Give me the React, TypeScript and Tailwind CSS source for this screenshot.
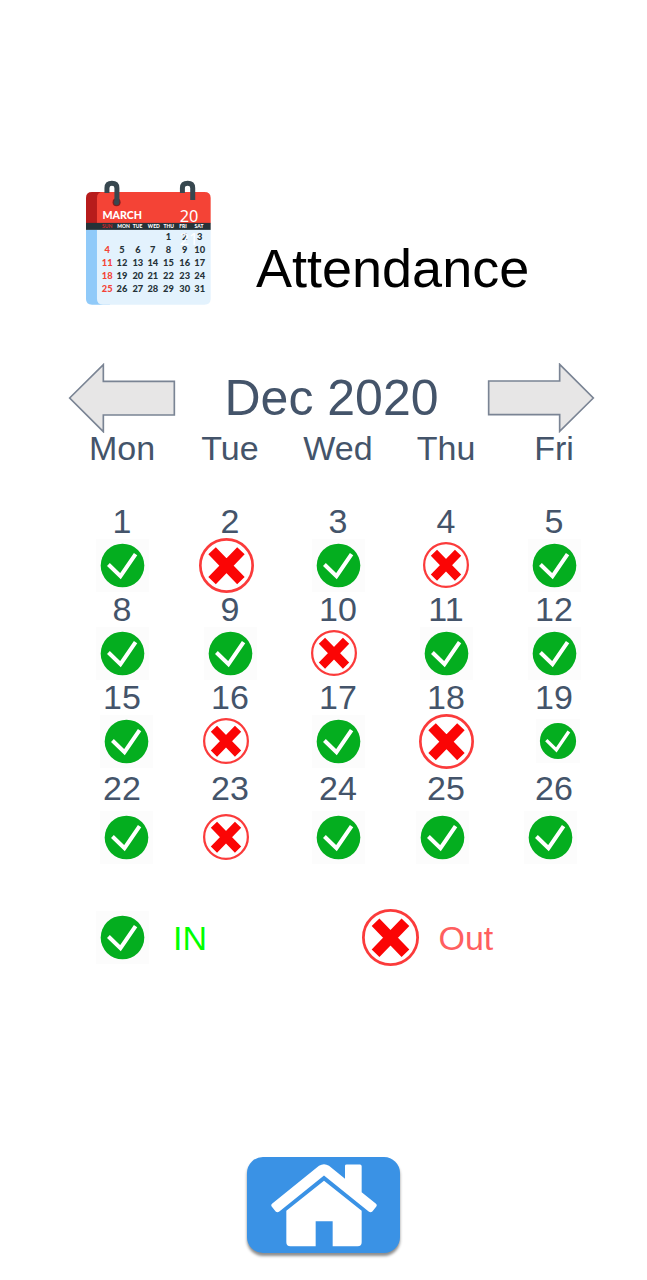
import React from "react";

type Status = "in" | "out";
type Size = "sm" | "md" | "lg" | "xl";
type Shift = "left" | "right";

interface Day {
  date: number;
  status: Status;
  size?: Size;
  shift?: Shift;
}

const weekdays = ["Mon", "Tue", "Wed", "Thu", "Fri"];

const weeks: Day[][] = [
  [
    { date: 1, status: "in" },
    { date: 2, status: "out", size: "lg", shift: "left" },
    { date: 3, status: "in" },
    { date: 4, status: "out" },
    { date: 5, status: "in" },
  ],
  [
    { date: 8, status: "in" },
    { date: 9, status: "in" },
    { date: 10, status: "out", shift: "left" },
    { date: 11, status: "in" },
    { date: 12, status: "in" },
  ],
  [
    { date: 15, status: "in", shift: "right" },
    { date: 16, status: "out", shift: "left" },
    { date: 17, status: "in" },
    { date: 18, status: "out", size: "lg" },
    { date: 19, status: "in", size: "sm", shift: "right" },
  ],
  [
    { date: 22, status: "in", shift: "right" },
    { date: 23, status: "out", shift: "left" },
    { date: 24, status: "in" },
    { date: 25, status: "in", shift: "left" },
    { date: 26, status: "in", shift: "left" },
  ],
];

const inSizes: Record<Size, string> = {
  sm: "size-11",
  md: "size-[53px]",
  lg: "size-[53px]",
  xl: "size-[53px]",
};

const outSizes: Record<Size, string> = {
  sm: "size-[46px]",
  md: "size-[46px]",
  lg: "size-[55px]",
  xl: "size-[57px]",
};

const shifts: Record<Shift, string> = { left: "pr-2", right: "pl-2" };

function StatusIcon({ status, size = "md" }: { status: Status; size?: Size }) {
  if (status === "in") {
    return (
      <svg viewBox="0 0 158 158" role="img" aria-label="In" className={`shrink-0 ${inSizes[size]}`}>
        <rect width="158" height="158" fill="#fcfcfc" />
        <circle cx="79" cy="79" r="65" fill="#04ae1f" />
        <path d="M37 76 L73 111 L118 45" fill="none" stroke="#fff" strokeWidth="12" />
      </svg>
    );
  }
  return (
    <svg viewBox="0 0 164 164" role="img" aria-label="Out" className={`shrink-0 ${outSizes[size]}`}>
      <circle cx="82" cy="82" r="78" fill="#fff" stroke="#fb3b3b" strokeWidth="8" />
      <path d="M39 38 L125 127 M125 38 L39 127" fill="none" stroke="#fb0505" strokeWidth="31" />
    </svg>
  );
}

const sheet: string[][] = [
  ["", "", "", "", "1", "2", "3"],
  ["4", "5", "6", "7", "8", "9", "10"],
  ["11", "12", "13", "14", "15", "16", "17"],
  ["18", "19", "20", "21", "22", "23", "24"],
  ["25", "26", "27", "28", "29", "30", "31"],
];
const sheetX = [112, 156, 204, 249, 296, 345, 390];
const sheetY = [212, 250, 288, 327, 366];
const sheetDays = ["SUN", "MON", "TUE", "WED", "THU", "FRI", "SAT"];
const sheetDayX = [112, 161, 203, 252, 297, 340, 388];

function CalendarIcon() {
  return (
    <svg viewBox="48 30 376 376" role="img" aria-label="Calendar" className="size-[125px] shrink-0">
      <path d="M48 159 V84 Q48 66 66 66 H120 V159 Z" fill="#b71c1c" />
      <path d="M48 179 V388 Q48 405 66 405 H120 V179 Z" fill="#90caf9" />
      <path d="M81 160 V84 Q81 66 99 66 H404 Q423 66 423 84 V160 Z" fill="#f44336" />
      <path d="M81 178 H423 V388 Q423 405 404 405 H99 Q81 405 81 388 Z" fill="#e3f2fd" />
      <rect x="48" y="159" width="375" height="21" fill="#263238" />
      <circle cx="140" cy="97" r="12" fill="#7f1d1d" />
      <path d="M111 69 V54 Q111 40 126 40 Q141 40 141 54 V97" fill="none" stroke="#37474f" strokeWidth="15" />
      <circle cx="140" cy="98" r="8" fill="#37474f" />
      <path d="M338 69 V54 Q338 40 354 40 Q369 40 369 54 V90" fill="none" stroke="#37474f" strokeWidth="15" />
      <g fontFamily="Lato, sans-serif" fontWeight="900" textAnchor="middle">
        <text x="157" y="147" fontSize="32" fill="#fff">MARCH</text>
        {sheetDays.map((name, i) => (
          <text key={name} x={sheetDayX[i]} y="174" fontSize="15" fill={i === 0 ? "#c62828" : "#fff"}>
            {name}
          </text>
        ))}
        {sheet.map((row, r) =>
          row.map((n, c) =>
            n ? (
              <text key={n} x={sheetX[c]} y={sheetY[r]} fontSize="28" fill={c === 0 ? "#f44336" : "#263238"}>
                {n}
              </text>
            ) : null
          )
        )}
      </g>
      <g fontFamily="'Noto Sans', sans-serif" fontSize="49" fill="#fff" textAnchor="middle">
        <text x="358" y="156">20</text>
        <text x="358" y="225">21</text>
      </g>
    </svg>
  );
}

function ArrowIcon({ className = "" }: { className?: string }) {
  return (
    <svg viewBox="0 0 324 210" aria-hidden="true" className={`h-[70px] w-[108px] ${className}`}>
      <path
        d="M5 105 L106 5 V55 H319 V156 H106 V206 Z"
        fill="#e7e6e6"
        stroke="#7a8494"
        strokeWidth="5"
      />
    </svg>
  );
}

function HomeIcon() {
  return (
    <svg viewBox="124 75 318 248" aria-hidden="true" className="h-[83px] w-[106px]" fill="#fff">
      <path d="M126 202 Q123 198 127 194 L268 80 Q283 71 298 80 L346 119 V80 Q346 76 351 76 H391 Q396 76 396 81 V159 L439 194 Q443 198 440 202 L428 217 Q423 222 417 217 L283 109 L149 217 Q143 222 138 217 Z" />
      <path d="M283 125 L396 215 V309 Q396 321 384 321 H309 V246 H258 V321 H182 Q170 321 170 309 V215 Z" />
    </svg>
  );
}

export default function App() {
  return (
    <div className="min-h-screen bg-white pt-[180px] pb-[26px] font-['Liberation_Sans',Arial,sans-serif] text-[34px] text-[#44546a]">
      <header className="flex items-end gap-[45px] pl-[86px]">
        <CalendarIcon />
        <h1 className="text-[54px] leading-[74px] text-black">Attendance</h1>
      </header>

      <main>
        <nav aria-label="Month" className="mt-[58px] flex items-center justify-between pr-[52px] pl-[68px]">
          <button type="button" aria-label="Previous month">
            <ArrowIcon />
          </button>
          <h2 className="text-[50px] leading-[70px]">Dec 2020</h2>
          <button type="button" aria-label="Next month">
            <ArrowIcon className="rotate-180" />
          </button>
        </nav>

        <div className="mt-px pr-[39px] pl-[68px]">
          <table className="w-full table-fixed border-collapse text-center">
            <thead>
              <tr>
                {weekdays.map((day) => (
                  <th key={day} scope="col" className="h-[67px] p-0 align-top leading-7 font-normal">
                    {day}
                  </th>
                ))}
              </tr>
            </thead>
            <tbody>
              {weeks.map((week, w) => {
                const last = w === weeks.length - 1;
                return (
                  <tr key={w}>
                    {week.map((day) => (
                      <td key={day.date} className={last ? "p-0 pt-[3px]" : "p-0"}>
                        <div className="leading-10">{day.date}</div>
                        <div
                          className={`flex items-center justify-center ${last ? "h-[58px]" : "h-12"} ${
                            day.shift ? shifts[day.shift] : ""
                          }`}
                        >
                          <StatusIcon status={day.status} size={day.size} />
                        </div>
                      </td>
                    ))}
                  </tr>
                );
              })}
            </tbody>
          </table>
        </div>

        <ul className="mt-[43px] grid grid-cols-2 items-center pr-[20px] pl-[96px] leading-10">
          <li className="flex items-center gap-6 text-[#00ff00]">
            <StatusIcon status="in" />
            IN
          </li>
          <li className="flex items-center gap-5 text-[#ff5f5f]">
            <StatusIcon status="out" size="xl" />
            Out
          </li>
        </ul>
      </main>

      <footer className="mt-[191px] flex justify-center">
        <a
          href="#home"
          aria-label="Home"
          className="flex h-24 w-[153px] items-center justify-center rounded-2xl bg-[#3a92e5] shadow-[0_3px_3px_rgba(0,0,0,0.45)]"
        >
          <HomeIcon />
        </a>
      </footer>
    </div>
  );
}
